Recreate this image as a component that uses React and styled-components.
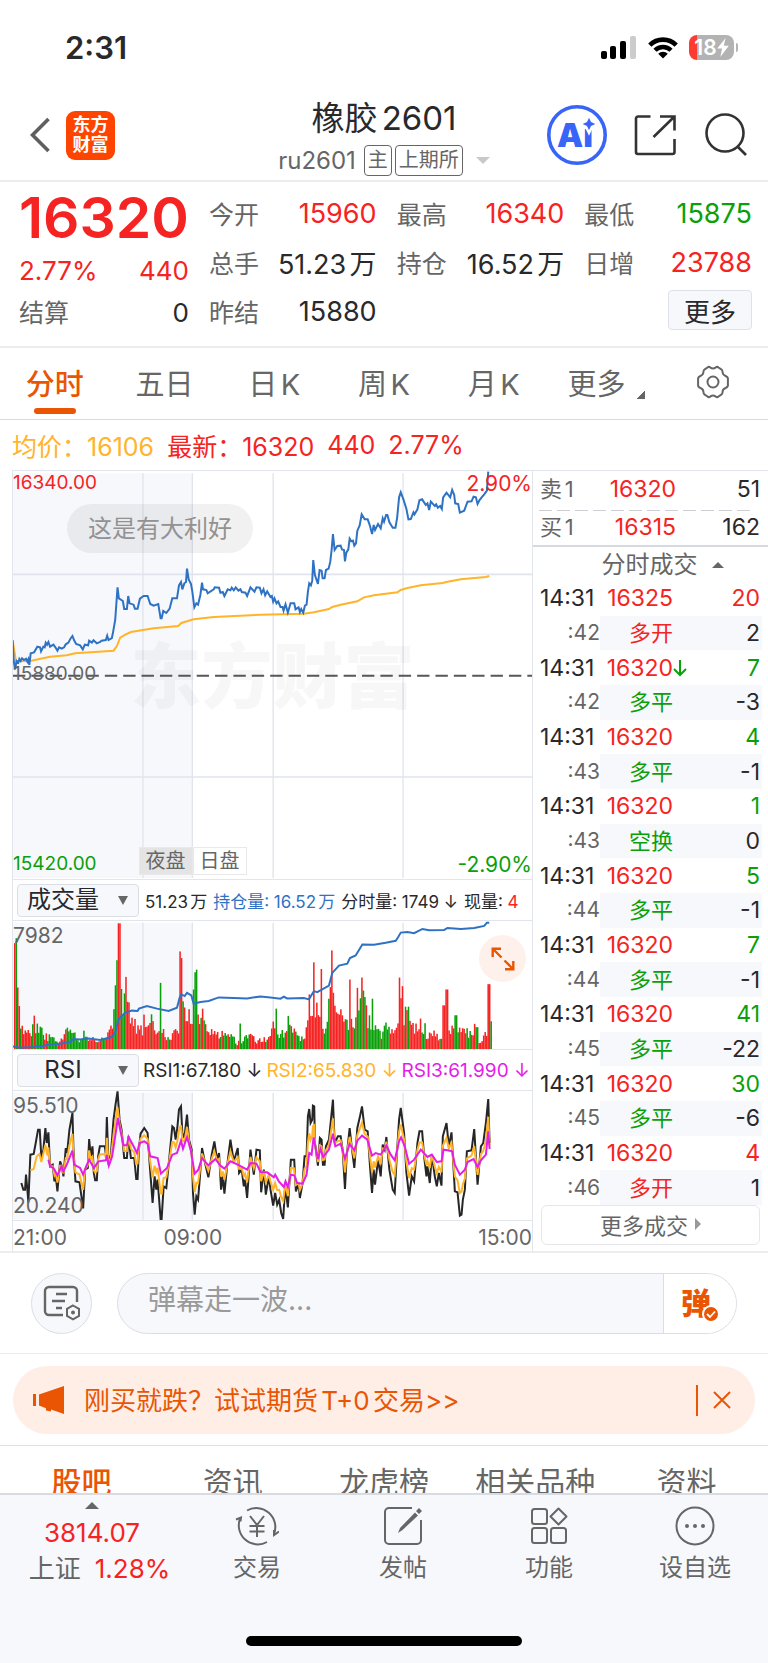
import React, {useState} from "react";
import styled, {createGlobalStyle, css} from "styled-components";

const colors = {
  red: "#f62323",
  green: "#0aa00a",
  orange: "#ea5504",
  yellow: "#ffb429",
  blue: "#2f72c4",
  magenta: "#e31ee6",
  dark: "#29292b",
  grey: "#666666",
  line: "#e3e5ec",
  soft: "#f7f8fb",
};

const GlobalStyle = createGlobalStyle`
  * {
    box-sizing: border-box;
  }
  body {
    margin: 0;
    background: #ffffff;
    color: ${colors.dark};
    font-family: Inter, "Noto Sans CJK SC", sans-serif;
    text-autospace: normal;
  }
  button, input, select {
    font-family: inherit;
    margin: 0;
    padding: 0;
    border: 0;
    background: none;
    color: inherit;
  }
  button {
    cursor: pointer;
  }
  a {
    color: inherit;
    text-decoration: none;
  }
  svg {
    display: block;
    flex-shrink: 0;
  }
`;

const Page = styled.div`
  width: 100%;
  overflow: hidden;
`;

/* status bar */

const StatusBar = styled.div`
  display: flex;
  justify-content: space-between;
  align-items: center;
  height: 89px;
  padding: 5px 30px 0 65px;
`;

const Clock = styled.span`
  font-size: 31px;
  font-weight: 600;
`;

const StatusIcons = styled.div`
  display: flex;
  align-items: center;
  gap: 11px;
`;

const Battery = styled.div`
  display: flex;
  align-items: center;
  justify-content: center;
  width: 45px;
  height: 25px;
  border-radius: 8px;
  background: linear-gradient(90deg, #ff3b30 18%, #b3b3b3 18%);
  color: #ffffff;
  font-size: 21px;
  font-weight: 600;
`;

const BatteryWrapper = styled.div`
  display: flex;
  align-items: center;
  gap: 2px;
`;

const BatteryTip = styled.span`
  width: 2px;
  height: 9px;
  border-radius: 0 2px 2px 0;
  background: #b3b3b3;
`;

/* header */

const Header = styled.header`
  display: grid;
  grid-template-columns: 1fr auto 1fr;
  align-items: center;
  height: 93px;
  padding: 0 20px;
  border-bottom: 2px solid #ececee;
`;

const HeaderLeft = styled.div`
  display: flex;
  align-items: center;
  gap: 16px;
  padding-left: 10px;
`;

const HeaderRight = styled.div`
  display: flex;
  align-items: center;
  justify-content: flex-end;
  gap: 27px;
`;

const IconButton = styled.button`
  display: flex;
`;

const Logo = styled.a`
  display: flex;
  flex-direction: column;
  justify-content: center;
  align-items: center;
  width: 49px;
  height: 49px;
  border-radius: 9px;
  background: #ff4400;
  color: #ffffff;
  font-size: 18px;
  font-weight: 600;
  line-height: 20px;
`;

const TitleBlock = styled.div`
  display: flex;
  flex-direction: column;
  align-items: center;
  padding-top: 8px;
`;

const Title = styled.h1`
  margin: 0;
  font-size: 33px;
  font-weight: 400;
  line-height: 42px;
`;

const ContractButton = styled.button`
  display: flex;
  align-items: center;
  gap: 3px;
  height: 42px;
  font-size: 24px;
  color: ${colors.grey};
`;

const Tag = styled.span`
  margin-left: ${(props) => (props.$first ? "5px" : "0")};
  padding: 0 3px;
  border: 1px solid ${colors.grey};
  border-radius: 4px;
  font-size: 20px;
  line-height: 29px;
`;

const Triangle = styled.span`
  width: 0;
  height: 0;
  border: ${(props) => props.$size || 6}px solid transparent;
  ${(props) => props.$dir === "up" && css`
    border-top: 0;
    border-bottom-color: ${props.$color};
  `}
  ${(props) => props.$dir === "down" && css`
    border-bottom: 0;
    border-top-color: ${props.$color};
  `}
  ${(props) => props.$dir === "right" && css`
    border-right: 0;
    border-left-color: ${props.$color};
  `}
`;

const ContractTriangle = styled(Triangle)`
  margin-left: 10px;
`;

/* quote numbers */

const QuotePanel = styled.section`
  display: grid;
  grid-template-columns: repeat(4, 1fr);
  gap: 20px;
  padding: 7px 16px 10px 19px;
  border-bottom: 2px solid #ececee;
`;

const QuoteColumn = styled.div`
  display: flex;
  flex-direction: column;
`;

const QuoteItem = styled.div`
  display: flex;
  justify-content: space-between;
  align-items: center;
  height: ${(props) => props.$height || 49}px;
  font-size: ${(props) => (props.$height ? 26 : 27)}px;
  white-space: nowrap;
`;

const QuoteLabel = styled.span`
  padding-bottom: 2px;
  color: ${colors.grey};
  font-size: 25px;
`;

const Num = styled.span`
  color: ${(props) => colors[props.$tone] || colors.dark};
`;

const LastPrice = styled.div`
  height: 58px;
  color: ${colors.red};
  font-size: 57px;
  font-weight: 600;
  line-height: 58px;
`;

const MoreButton = styled.button`
  align-self: flex-end;
  width: 84px;
  height: 40px;
  margin-top: 3px;
  border: 1px solid #dfe1e8;
  border-radius: 4px;
  background: ${colors.soft};
  font-size: 26px;
`;

/* period tabs */

const PeriodTabs = styled.nav`
  display: grid;
  grid-template-columns: repeat(7, 1fr);
  height: 72px;
  border-bottom: 1px solid #d8dae1;
`;

const PeriodTab = styled.button`
  display: flex;
  align-items: center;
  justify-content: center;
  position: relative;
  padding-bottom: 3px;
  color: ${(props) => (props.$active ? colors.orange : colors.grey)};
  font-size: 29px;
  font-weight: ${(props) => (props.$active ? 500 : 400)};
  white-space: nowrap;

  &::after {
    content: "";
    display: ${(props) => (props.$active ? "block" : "none")};
    position: absolute;
    bottom: 5px;
    width: 42px;
    height: 6px;
    border-radius: 3px;
    background: ${colors.orange};
  }
`;

const CornerMark = styled.span`
  align-self: flex-end;
  width: 8px;
  height: 8px;
  margin: 0 -6px 17px 12px;
  background: linear-gradient(135deg, transparent 50%, ${colors.grey} 50%);
`;

const Legend = styled.div`
  display: flex;
  align-items: center;
  gap: 13px;
  height: 50px;
  padding-left: 12px;
  color: ${colors.red};
  font-size: 25px;
`;

const LegendAverage = styled.span`
  color: ${colors.yellow};
`;

/* charts */

const Market = styled.section`
  display: grid;
  grid-template-columns: minmax(0, 533fr) minmax(0, 235fr);
  border-bottom: 2px solid #ececee;
`;

const Charts = styled.div`
  margin-left: 12px;
  border: solid ${colors.line};
  border-width: 0 1px 0 1px;
`;

const Plot = styled.div`
  position: relative;
  height: ${(props) => props.$height}px;
  border-top: 1px solid ${colors.line};
  border-bottom: 1px solid ${colors.line};

  svg {
    width: 100%;
    height: 100%;
  }
`;

const PlotLabel = styled.span`
  position: absolute;
  color: ${(props) => colors[props.$tone] || colors.grey};
  font-size: ${(props) => (props.$small ? 19 : 21)}px;
  line-height: 22px;
  ${(props) => (props.$right ? "right: 0;" : "left: 0;")}
  ${(props) => (props.$bottom !== undefined ? `bottom: ${props.$bottom}px;` : `top: ${props.$top}px;`)}
`;

const Watermark = styled.span`
  position: absolute;
  top: 157px;
  left: 50%;
  transform: translateX(-50%);
  color: rgba(60, 60, 70, 0.045);
  font-size: 71px;
  font-weight: 900;
  line-height: 96px;
  white-space: nowrap;
`;

const Bullet = styled.span`
  position: absolute;
  top: 33px;
  left: 54px;
  padding: 0 21px;
  border-radius: 25px;
  background: rgba(0, 0, 0, 0.055);
  color: #929292;
  font-size: 24px;
  line-height: 49px;
`;

const Sessions = styled.div`
  display: flex;
  position: absolute;
  left: 24.2%;
  bottom: 4px;
`;

const Session = styled.span`
  width: 54px;
  border: 1px solid #e9e9ea;
  background: ${(props) => (props.$active ? "#e4e4e5" : "#ffffff")};
  color: ${colors.grey};
  font-size: 20px;
  line-height: 26px;
  text-align: center;
`;

const IndicatorBar = styled.div`
  display: flex;
  align-items: center;
  gap: ${(props) => props.$gap}px;
  height: 40px;
  padding-left: 4px;
  font-size: ${(props) => props.$fontSize}px;
  white-space: nowrap;
`;

const IndicatorPicker = styled.label`
  display: flex;
  align-items: center;
  flex-shrink: 0;
  width: 122px;
  height: 33px;
  padding: 0 10px 0 4px;
  border: 1px solid #dcdee6;
  border-radius: 4px;
  background: ${colors.soft};
`;

const IndicatorSelect = styled.select`
  flex: 1;
  min-width: 0;
  padding-right: 14px;
  appearance: none;
  outline: none;
  font-size: 24px;
  line-height: 30px;
  text-align-last: center;
`;

const ExpandButton = styled.button`
  display: flex;
  align-items: center;
  justify-content: center;
  position: absolute;
  top: 14px;
  right: 6px;
  width: 47px;
  height: 47px;
  border-radius: 50%;
  background: #fef1ec;

  svg {
    width: 24px;
    height: 24px;
  }
`;

const TimeAxis = styled.div`
  display: grid;
  grid-template-columns: 29fr 36fr 35fr;
  height: 30px;
  color: ${colors.grey};
  font-size: 21px;
  line-height: 33px;

  span:last-child {
    text-align: right;
  }
`;

/* order book and trades */

const Side = styled.div`
  display: flex;
  flex-direction: column;
`;

const Book = styled.div`
  border-top: 1px solid ${colors.line};
  border-bottom: 2px solid #d6d9e0;
`;

const BookRow = styled.div`
  display: grid;
  grid-template-columns: 60px 76px 1fr;
  align-items: center;
  height: ${(props) => (props.$last ? 34 : 39)}px;
  padding: 0 8px 3px 7px;
  font-size: 23px;
  line-height: 30px;
  text-align: right;
`;

const BookLabel = styled.span`
  color: ${colors.grey};
  font-size: 22px;
  text-align: left;
`;

const BookDivider = styled.div`
  height: 1px;
  margin: 0 13px 0 6px;
  background: repeating-linear-gradient(90deg, #cdcfd5 0 13px, transparent 13px 18px);
`;

const TradesTitle = styled.button`
  display: flex;
  align-items: center;
  justify-content: center;
  gap: 14px;
  height: 34px;
  padding: 2px 0 0 24px;
  color: ${colors.grey};
  font-size: 24px;
  line-height: 32px;
`;

const TradeTable = styled.table`
  width: auto;
  height: 624px;
  margin: 0 6px 0 7px;
  border-collapse: collapse;
  table-layout: fixed;
  font-size: 23px;
  line-height: 30px;

  td {
    padding: 0;
    text-align: right;
    white-space: nowrap;
  }
`;

const TimeCell = styled.td`
  && {
    width: 60px;
    text-align: left;
  }
`;

const SecondCell = styled.td`
  color: ${colors.grey};
  font-size: 21px;
`;

const PriceCell = styled.td`
  width: 73px;
  color: ${colors.red};
`;

const ArrowCell = styled.td`
  width: 14px;
`;

const AmountCell = styled.td`
  && {
    padding-right: 2px;
    color: ${(props) => colors[props.$tone] || colors.dark};
  }
`;

const TypeCell = styled.td`
  background: ${colors.soft};
  color: ${(props) => colors[props.$tone]};
  font-size: 22px;
`;

const ChangeCell = styled.td`
  && {
    padding-right: 2px;
    background: ${colors.soft};
  }
`;

const MoreTrades = styled.button`
  display: flex;
  align-items: center;
  justify-content: center;
  gap: 7px;
  height: 40px;
  margin: 0 8px;
  padding-bottom: 3px;
  border: 1px solid #e6e7eb;
  border-radius: 6px;
  color: ${colors.grey};
  font-size: 22px;
`;

/* comment bar */

const CommentBar = styled.form`
  display: flex;
  align-items: center;
  gap: 25px;
  height: 101px;
  padding: 0 31px;
  border-bottom: 1px solid #ededf0;
`;

const RoundButton = styled.button`
  display: flex;
  align-items: center;
  justify-content: center;
  flex-shrink: 0;
  width: 61px;
  height: 61px;
  border: 1px solid #dcdee6;
  border-radius: 50%;
  background: ${colors.soft};
`;

const CommentField = styled.div`
  display: flex;
  flex: 1;
  height: 61px;
  border: 1px solid #dcdee6;
  border-radius: 31px;
  background: ${colors.soft};
  overflow: hidden;
`;

const CommentInput = styled.input`
  flex: 1;
  min-width: 0;
  padding: 0 0 6px 30px;
  outline: none;
  font-size: 28px;

  &::placeholder {
    color: #9a9a9a;
    opacity: 1;
  }
`;

const BulletToggle = styled.button`
  position: relative;
  width: 73px;
  padding-left: 17px;
  border-left: 1px solid #dcdee6;
  background: #ffffff;
  color: ${colors.orange};
  font-size: 30px;
  font-weight: 900;
  line-height: 54px;
  text-align: left;

  svg {
    position: absolute;
    right: 16px;
    bottom: 10px;
  }
`;

/* promo banner */

const BannerSection = styled.section`
  padding: 12px 13px 11px;
  border-bottom: 1px solid #e1e2e6;
`;

const Banner = styled.div`
  display: flex;
  align-items: center;
  height: 68px;
  padding: 0 24px 0 20px;
  border-radius: 34px;
  background: #feeee6;
  color: ${colors.orange};
`;

const BannerLink = styled.a`
  flex: 1;
  padding: 0 0 3px 19px;
  font-size: 26px;
`;

const BannerClose = styled.button`
  display: flex;
  align-items: center;
  height: 31px;
  padding-left: 15px;
  border-left: 2px solid ${colors.orange};
`;

const InfoTabs = styled.nav`
  display: grid;
  grid-template-columns: repeat(5, 1fr);
  height: 47px;
  padding: 0 6px;
  overflow: hidden;
`;

const InfoTab = styled.a`
  padding-top: 14px;
  color: ${(props) => (props.$active ? colors.orange : colors.grey)};
  font-size: 30px;
  font-weight: ${(props) => (props.$active ? 500 : 400)};
  line-height: 44px;
  text-align: center;
`;

/* bottom bar */

const BottomBar = styled.footer`
  padding-bottom: 17px;
  border-top: 2px solid #d9dbe2;
  background: ${colors.soft};
`;

const BottomItems = styled.div`
  display: grid;
  grid-template-columns: 184fr 146fr 146fr 146fr 146fr;
  height: 141px;
`;

const IndexButton = styled.button`
  display: flex;
  flex-direction: column;
  align-items: center;
  padding: 7px 0 0 0;
  font-size: 26px;
  line-height: 36px;
  color: ${colors.grey};
`;

const IndexValue = styled.span`
  margin-top: 6px;
  color: ${colors.red};
`;

const IndexRow = styled.span`
  display: flex;
  gap: 14px;
  padding-left: 15px;
`;

const BottomButton = styled.button`
  display: flex;
  flex-direction: column;
  align-items: center;
  gap: 3px;
  padding-top: 9px;
  color: ${colors.grey};
  font-size: 24px;
  line-height: 34px;
`;

const HomeIndicator = styled.div`
  width: 36%;
  height: 10px;
  margin: 0 auto;
  border-radius: 5px;
  background: #000000;
`;

/* series, three units to the pixel */

const shift = (points) => points.map(([x, y]) => [x + 780, y]);

const PRICE = [
  [38,541],[41,600],[45,628],[50,603],[55,608],[58,597],[62,603],[66,595],[72,600],[78,596],[82,605],[85,598],[88,615],[92,580],
  [102,577],[112,560],[120,562],[123,574],[130,560],[134,562],[137,548],[141,554],[145,546],[150,560],[160,554],[166,562],[172,572],
  [177,562],[185,566],[192,562],[197,553],[205,548],[211,536],[217,528],[222,541],[228,552],[240,556],[248,568],[254,554],[264,556],
  [267,542],[275,548],[280,541],[290,550],[300,546],[304,542],[317,540],[321,527],[325,540],[335,534],[338,520],[345,480],[352,382],
  [356,415],[368,423],[372,447],[380,447],[384,408],[388,430],[400,434],[404,446],[412,446],[419,416],[430,408],[442,408],[450,432],
  [460,437],[474,432],[481,475],[484,475],[489,453],[498,459],[508,446],[516,415],[530,415],[536,376],[542,366],[546,388],[552,370],
  [557,366],[560,326],[565,358],[572,372],[576,395],[582,442],[588,430],[593,434],[600,405],[605,368],[608,388],[618,390],[622,400],
  [640,388],[643,382],[656,383],[660,398],[667,396],[672,408],[682,388],[690,391],[694,383],[700,391],[706,382],[714,392],[720,388],
  [724,396],[735,398],[740,408],[750,382],[762,395],[768,382],[778,383],[783,400],[789,388],
  ...shift([
    [14,406],[20,394],[30,411],[34,408],[38,425],[42,415],[48,430],[53,424],[60,441],[66,441],[69,452],[75,433],[82,458],[90,430],
    [101,430],[105,448],[114,442],[118,456],[122,447],[128,458],[133,437],[138,434],[142,395],[146,370],[151,376],[155,362],[158,300],
    [163,345],[172,372],[177,330],[183,332],[186,355],[192,355],[196,330],[204,326],[209,305],[213,270],[217,222],[222,270],[230,258],
    [240,257],[244,268],[250,270],[253,304],[257,278],[263,268],[267,236],[272,244],[277,242],[281,257],[286,250],[290,212],[297,196],
    [303,163],[312,178],[321,178],[328,198],[334,222],[339,195],[343,210],[352,192],[360,205],[366,175],[370,185],[376,165],[380,165],
    [386,187],[396,203],[404,203],[409,175],[415,112],[420,97],[428,118],[437,147],[443,178],[450,177],[458,157],[461,163],[470,148],
    [476,121],[484,118],[495,135],[500,130],[505,150],[510,125],[522,138],[526,133],[531,143],[538,138],[543,147],[547,112],[557,98],
    [568,112],[574,90],[580,105],[583,130],[592,132],[597,158],[610,152],[620,125],[632,124],[638,110],[645,112],[650,132],[656,120],
    [664,110],[670,103],[678,92],[682,35],
  ]),
];

const AVERAGE = [
  [38,541],[48,604],[90,603],[150,590],[200,586],[225,580],[340,572],[350,558],[360,533],[375,524],[392,516],[460,505],[534,498],
  [543,489],[560,484],[580,478],[640,471],[780,464],
  ...shift([
    [130,461],[160,457],[205,447],[215,441],[240,434],[290,424],[310,412],[340,406],[410,397],[420,390],[440,384],[480,376],[545,369],
    [560,365],[600,358],[675,351],[685,348],
  ]),
];

const OPEN_INTEREST = [
  [38,412],[60,416],[100,414],[115,410],[122,413],[140,408],[180,404],[210,399],[220,390],[240,391],[265,388],[300,393],[335,384],
  [345,370],[355,330],[375,310],[395,304],[412,305],[416,298],[440,290],[470,298],[505,305],[530,295],[538,265],[543,255],[553,260],
  [560,250],[573,258],[580,283],[600,278],[625,275],[655,264],[700,266],[740,267],[780,261],
  ...shift([
    [30,264],[60,268],[70,262],[80,267],[130,266],[145,270],[160,245],[170,248],[205,228],[215,190],[235,168],[260,162],[268,145],
    [285,137],[305,104],[340,105],[375,99],[405,93],[412,82],[420,68],[440,66],[460,70],[475,62],[485,57],[505,61],[550,60],[560,54],
    [600,57],[640,54],[670,48],[678,38],[685,38],
  ]),
];

const VOLUME_SHAPE = [
  [42,300],[50,320],[55,150],[65,65],[90,50],[100,90],[118,60],[135,45],[170,25],[195,50],[220,65],[235,20],[250,50],[290,22],[325,45],
  [340,95],[348,285],[354,360],[362,215],[372,140],[380,170],[390,110],[405,75],[425,60],[440,60],[455,85],[470,40],[490,60],[510,22],
  [520,65],[535,40],[541,280],[549,130],[565,125],[575,65],[583,235],[592,100],[608,95],[620,55],[640,50],[690,48],[710,18],[745,45],
  [770,25],[805,35],
  ...shift([
    [47,95],[55,40],[85,75],[120,28],[135,45],[148,120],[160,130],[180,105],[195,60],[212,250],[225,110],[250,85],[290,80],[303,190],
    [320,100],[340,90],[360,45],[378,70],[392,60],[405,50],[420,190],[430,110],[445,115],[458,60],[480,75],[500,40],[515,55],[540,30],
    [560,50],[585,75],[620,55],[640,40],[655,25],[680,60],[690,90],
  ]),
];

const VOLUME_PEAKS = [
  [44,320,1],[48,335,0],[53,186,1],[57,130,1],[357,380,1],[361,352,0],[378,218,1],[481,200,0],[541,295,1],[545,275,1],[583,232,0],
  [587,240,0],[608,122,1],[720,77,0],[433,104,1],[455,105,0],
  ...[
    [49,122,0],[84,100,0],[148,165,1],[161,262,1],[183,242,1],[215,298,1],[219,170,1],[242,120,1],[269,210,1],[292,185,1],[305,216,1],
    [313,157,0],[336,152,0],[376,80,0],[418,216,1],[424,190,1],[436,128,0],[445,128,0],[480,92,1],[494,78,0],[549,132,1],[558,180,1],
    [585,102,0],[640,76,1],[648,66,0],[684,196,1],[689,84,0],
  ].map(([x, h, c]) => [x + 780, h, c]),
];

const RSI_FAST = [
  [64,820],[70,840],[75,840],[78,795],[82,840],[85,878],[91,735],[101,733],[107,700],[114,660],[119,660],[124,745],[130,720],[136,655],
  [140,700],[145,668],[150,770],[158,765],[163,815],[166,790],[172,845],[180,755],[184,765],[190,800],[197,715],[201,730],[208,660],
  [217,610],[220,720],[226,815],[238,818],[249,896],[255,780],[263,775],[267,688],[272,740],[277,710],[281,790],[285,812],[290,812],
  [294,740],[299,710],[314,710],[317,735],[320,622],[325,765],[332,735],[340,630],[346,585],[352,545],[358,630],[364,660],[372,745],
  [380,745],[385,680],[392,745],[402,745],[408,808],[412,808],[416,720],[421,672],[432,655],[442,670],[448,760],[457,880],[463,800],
  [468,840],[472,810],[481,928],[484,928],[490,830],[498,835],[508,735],[516,650],[521,655],[526,690],[531,655],[536,600],[542,590],
  [546,670],[552,685],[560,615],[566,690],[574,720],[578,850],[583,915],[588,860],[593,870],[598,810],[605,715],[614,760],[624,803],
  [634,735],[642,695],[650,750],[656,730],[662,840],[667,800],[672,852],[680,770],[690,690],[700,755],[706,735],[712,715],[716,790],
  [724,780],[730,830],[734,810],[740,865],[750,720],[760,795],[768,720],[778,722],[782,848],[790,780],[796,855],[805,800],
  ...shift([
    [30,840],[38,888],[44,850],[50,885],[56,870],[62,910],[68,928],[74,830],[82,893],[91,750],[101,750],[106,845],[114,820],[118,865],
    [126,820],[132,740],[138,740],[142,620],[146,598],[150,640],[155,630],[157,588],[161,590],[163,700],[172,768],[178,685],[183,690],
    [187,765],[192,765],[196,710],[205,690],[212,620],[217,570],[222,700],[232,680],[240,680],[246,720],[253,838],[258,740],[267,655],
    [273,710],[281,775],[290,655],[298,620],[304,590],[312,660],[321,665],[328,770],[334,850],[339,780],[343,825],[352,750],[360,800],
    [366,705],[372,720],[377,682],[386,780],[396,840],[402,850],[408,740],[415,630],[420,595],[430,670],[437,790],[445,858],[453,800],
    [460,815],[470,700],[476,665],[484,665],[490,740],[497,800],[500,770],[507,820],[513,735],[522,800],[528,830],[534,790],[542,828],
    [546,680],[557,640],[564,710],[572,668],[582,845],[590,848],[597,918],[602,915],[606,870],[612,840],[618,725],[632,722],[640,658],
    [650,825],[660,710],[667,700],[675,640],[682,568],[686,700],
  ]),
];

const RSI_SLOW = [
  [145,750],[150,770],[160,775],[172,797],[184,770],[190,785],[200,765],[217,723],[222,765],[240,775],[249,795],[258,770],[267,750],
  [274,762],[281,775],[295,755],[317,752],[320,736],[326,768],[336,740],[345,680],[353,625],[362,670],[370,707],[380,707],[385,682],
  [400,710],[410,730],[418,700],[432,695],[442,702],[450,740],[472,745],[482,792],[500,775],[516,735],[530,730],[542,693],[548,717],
  [560,682],[572,725],[583,792],[594,780],[605,745],[624,767],[645,748],[660,768],[672,777],[690,755],[712,765],[740,780],[750,760],
  [768,762],[780,787],[800,788],
  ...shift([
    [40,803],[44,795],[55,815],[70,832],[75,815],[82,832],[91,795],[101,797],[110,820],[126,822],[138,795],[146,730],[153,735],[159,683],
    [172,748],[180,718],[188,742],[205,720],[217,672],[224,710],[240,702],[253,747],[267,703],[281,722],[290,693],[304,678],[320,690],
    [334,738],[345,730],[360,735],[377,708],[390,735],[402,752],[415,695],[421,683],[432,710],[445,762],[460,750],[480,720],[500,742],
    [513,735],[528,757],[542,755],[548,720],[560,722],[574,725],[582,765],[597,795],[612,780],[620,757],[638,748],[650,772],[660,752],
    [675,735],[682,665],[686,718],
  ]),
];

const valueAt = (points, x) => {
  const next = points.findIndex((p) => p[0] >= x);
  if (next <= 0) return points[next === 0 ? 0 : points.length - 1][1];
  const [x0, y0] = points[next - 1];
  const [x1, y1] = points[next];
  return y0 + ((y1 - y0) * (x - x0)) / (x1 - x0);
};

const RSI_MIDDLE = [
  [91,782],[101,778],[110,740],[118,733],[124,757],[136,705],[142,738],
  ...RSI_FAST.filter(([x]) => x >= 145).map(([x, y]) => [x, y * 0.45 + valueAt(RSI_SLOW, x) * 0.55]),
];

const buildVolume = () => {
  const bars = [];
  let seed = 11;
  let up = 1;
  const random = () => {
    seed = (seed * 16807) % 2147483647;
    return seed / 2147483647;
  };
  for (let x = 42; x < 1472; x += 4.5) {
    if (random() < 0.4) up = random() < 0.62 ? 1 : 0;
    const peak = VOLUME_PEAKS.find((p) => Math.abs(p[0] - x - 2.25) <= 2.25);
    const noisy = valueAt(VOLUME_SHAPE, x + 2) * (0.6 + random() * 0.6);
    bars.push({x, height: peak ? peak[1] : Math.max(noisy, 6), up: peak ? peak[2] : up});
  }
  return bars;
};

const VOLUME = buildVolume();

const toLine = (points) => points.map((p) => p.join(",")).join(" ");

const Series = ({points, color, width = 2}) => (
  <polyline
    points={toLine(points)}
    fill="none"
    stroke={color}
    strokeWidth={width}
    strokeLinejoin="miter"
    vectorEffect="non-scaling-stroke"
  />
);

const Grid = ({top, bottom}) => (
  <g>
    <rect x="39" y={top} width="537" height={bottom - top} fill={colors.soft}/>
    {[428, 576, 818, 1207].map((x) => (
      <line key={x} x1={x} x2={x} y1={top} y2={bottom} stroke="#e1e4ec" strokeWidth="4"/>
    ))}
  </g>
);

const trades = [
  {price: "16325", amount: "20", tone: "red", second: ":42", type: "多开", typeTone: "red", change: "2"},
  {price: "16320", amount: "7", tone: "green", second: ":42", type: "多平", typeTone: "green", change: "-3", down: true},
  {price: "16320", amount: "4", tone: "green", second: ":43", type: "多平", typeTone: "green", change: "-1"},
  {price: "16320", amount: "1", tone: "green", second: ":43", type: "空换", typeTone: "green", change: "0"},
  {price: "16320", amount: "5", tone: "green", second: ":44", type: "多平", typeTone: "green", change: "-1"},
  {price: "16320", amount: "7", tone: "green", second: ":44", type: "多平", typeTone: "green", change: "-1"},
  {price: "16320", amount: "41", tone: "green", second: ":45", type: "多平", typeTone: "green", change: "-22"},
  {price: "16320", amount: "30", tone: "green", second: ":45", type: "多平", typeTone: "green", change: "-6"},
  {price: "16320", amount: "4", tone: "red", second: ":46", type: "多开", typeTone: "red", change: "1"},
];

const quoteColumns = [
  [["今开", "15960", "red"], ["总手", "51.23万"], ["昨结", "15880"]],
  [["最高", "16340", "red"], ["持仓", "16.52万"]],
  [["最低", "15875", "green"], ["日增", "23788", "red"]],
];

const periods = ["分时", "五日", "日K", "周K", "月K"];
const infoTabs = ["股吧", "资讯", "龙虎榜", "相关品种", "资料"];

const StatusRow = () => (
  <StatusBar>
    <Clock>2:31</Clock>
    <StatusIcons>
      <svg width="36" height="23" viewBox="0 0 36 23">
        <rect x="0" y="15" width="6" height="8" rx="2"/>
        <rect x="9" y="10" width="6" height="13" rx="2"/>
        <rect x="19" y="5" width="6" height="18" rx="2"/>
        <rect x="29" y="0" width="6" height="23" rx="2" fill="#cccccc"/>
      </svg>
      <svg width="30" height="23" viewBox="0 0 30 23" fill="none" stroke="#000000" strokeWidth="5">
        <path d="M1.8 9.2a18.5 18.5 0 0 1 26.4 0" strokeWidth="4.6"/>
        <path d="M7 14.3a11.2 11.2 0 0 1 16 0" strokeWidth="4.4"/>
        <path d="M15 22.5l-4.8-4.8a6.8 6.8 0 0 1 9.6 0z" fill="#000000" stroke="none"/>
      </svg>
      <BatteryWrapper>
        <Battery>
          18
          <svg width="12" height="19" viewBox="0 0 11 18" fill="#ffffff">
            <path d="M8 0L0 10h4.6L3 18l8-10.6H6.2z"/>
          </svg>
        </Battery>
        <BatteryTip/>
      </BatteryWrapper>
    </StatusIcons>
  </StatusBar>
);

const TopHeader = () => (
  <Header>
    <HeaderLeft>
      <IconButton aria-label="返回">
        <svg width="20" height="36" viewBox="0 0 20 36" fill="none" stroke="#5f5f5f" strokeWidth="3.6">
          <path d="M18.5 2L2.5 18l16 16"/>
        </svg>
      </IconButton>
      <Logo href="#home">
        <span>东方</span>
        <span>财富</span>
      </Logo>
    </HeaderLeft>
    <TitleBlock>
      <Title>橡胶2601</Title>
      <ContractButton>
        ru2601
        <Tag $first>主</Tag>
        <Tag>上期所</Tag>
        <ContractTriangle $dir="down" $size={7} $color="#c9c9c9"/>
      </ContractButton>
    </TitleBlock>
    <HeaderRight>
      <IconButton aria-label="Ai">
        <svg width="60" height="60" viewBox="0 0 60 60" fill="#3865f8">
          <circle cx="30" cy="30" r="28.2" fill="none" stroke="#3865f8" strokeWidth="3.6"/>
          <text x="28" y="42" textAnchor="middle" fontSize="33" fontWeight="900">Ai</text>
          <path
            d="M42 10l2.900 6.100L51 19l-6.100 2.900L42 28l-2.900-6.100L33 19l6.100-2.900z"
            stroke="#ffffff" strokeWidth="2.400"
          />
        </svg>
      </IconButton>
      <IconButton aria-label="分享">
        <svg width="43" height="42" viewBox="0 0 43 42" fill="none" stroke="#333333" strokeWidth="2.6">
          <path d="M16.5 2.5H4a2 2 0 0 0-2 2V38a2 2 0 0 0 2 2h34.500a2 2 0 0 0 2-2V25"/>
          <path d="M26 2.500h14.500v14M40.500 2.500L19.500 23"/>
        </svg>
      </IconButton>
      <IconButton aria-label="搜索">
        <svg width="44" height="44" viewBox="0 0 44 44" fill="none" stroke="#333333" strokeWidth="2.6">
          <circle cx="21" cy="20" r="18.5"/>
          <path d="M33.500 33.500l8.500 8.500"/>
        </svg>
      </IconButton>
    </HeaderRight>
  </Header>
);

const Quotes = () => (
  <QuotePanel>
    <QuoteColumn>
      <LastPrice>16320</LastPrice>
      <QuoteItem $height={47}>
        <Num $tone="red">2.77%</Num>
        <Num $tone="red">440</Num>
      </QuoteItem>
      <QuoteItem $height={36}>
        <QuoteLabel>结算</QuoteLabel>
        <Num>0</Num>
      </QuoteItem>
    </QuoteColumn>
    {quoteColumns.map((column, index) => (
      <QuoteColumn key={index}>
        {column.map(([label, value, tone]) => (
          <QuoteItem key={label}>
            <QuoteLabel>{label}</QuoteLabel>
            <Num $tone={tone}>{value}</Num>
          </QuoteItem>
        ))}
        {index === 2 && <MoreButton>更多</MoreButton>}
      </QuoteColumn>
    ))}
  </QuotePanel>
);

const PricePlot = () => (
  <Plot $height={410}>
    <svg viewBox="39 33 1554 1224" preserveAspectRatio="none">
      <Grid top={40} bottom={1254}/>
      <line x1="39" x2="1593" y1="343" y2="343" stroke="#e1e4ec" strokeWidth="5"/>
      <line x1="39" x2="1593" y1="951" y2="951" stroke="#e1e4ec" strokeWidth="5"/>
      <line x1="39" x2="1593" y1="647" y2="647" stroke="#57575a" strokeWidth="6" strokeDasharray="37 18"/>
      <Series points={AVERAGE} color={colors.yellow}/>
      <Series points={PRICE} color={colors.blue}/>
    </svg>
    <Watermark>东方财富</Watermark>
    <PlotLabel $small $tone="red" $top={1}>16340.00</PlotLabel>
    <PlotLabel $tone="red" $top={2} $right>2.90%</PlotLabel>
    <PlotLabel $small $top={192}>15880.00</PlotLabel>
    <PlotLabel $small $tone="green" $bottom={4}>15420.00</PlotLabel>
    <PlotLabel $tone="green" $bottom={3} $right>-2.90%</PlotLabel>
    <Bullet>这是有大利好</Bullet>
    <Sessions>
      <Session $active>夜盘</Session>
      <Session>日盘</Session>
    </Sessions>
  </Plot>
);

const VolumePlot = () => (
  <Plot $height={130}>
    <svg viewBox="39 33 1554 387" preserveAspectRatio="none">
      <Grid top={38} bottom={420}/>
      {VOLUME.map((bar) => (
        <rect
          key={bar.x}
          x={bar.x}
          y={420 - bar.height}
          width="4.6"
          height={bar.height}
          fill={bar.up ? colors.red : colors.green}
        />
      ))}
      <Series points={OPEN_INTEREST} color={colors.blue}/>
    </svg>
    <PlotLabel $top={4}>7982</PlotLabel>
    <ExpandButton aria-label="全屏">
      <svg viewBox="0 0 24 24" fill="none" stroke={colors.orange} strokeWidth="2.4">
        <path d="M10 1.700H1.700V10M2 2l8.500 8.500M14 22.300h8.300V14M22 22l-8.500-8.500"/>
      </svg>
    </ExpandButton>
  </Plot>
);

const RsiPlot = () => (
  <Plot $height={131}>
    <svg viewBox="39 544 1554 387" preserveAspectRatio="none">
      <Grid top={549} bottom={930}/>
      <Series points={RSI_FAST} color="#262626"/>
      <Series points={RSI_MIDDLE} color={colors.yellow}/>
      <Series points={RSI_SLOW} color={colors.magenta}/>
    </svg>
    <PlotLabel $top={4}>95.510</PlotLabel>
    <PlotLabel $bottom={3}>20.240</PlotLabel>
  </Plot>
);

const Picker = ({label, options}) => (
  <IndicatorPicker>
    <IndicatorSelect aria-label={label}>
      {options.map((option) => <option key={option}>{option}</option>)}
    </IndicatorSelect>
    <svg width="10" height="9" viewBox="0 0 10 9"><path d="M0 0h10L5 9z" fill="#666666"/></svg>
  </IndicatorPicker>
);

const Trades = () => (
  <TradeTable>
    <tbody>
      {trades.map((trade, index) => (
        <React.Fragment key={index}>
          <tr>
            <TimeCell>14:31</TimeCell>
            <PriceCell>{trade.price}</PriceCell>
            <ArrowCell>{trade.down && (
              <svg width="14" height="18" viewBox="0 0 14 18" fill="none" stroke={colors.green} strokeWidth="2">
                <path d="M7 1v15M1 10l6 6 6-6"/>
              </svg>
            )}</ArrowCell>
            <AmountCell $tone={trade.tone}>{trade.amount}</AmountCell>
          </tr>
          <tr>
            <SecondCell>{trade.second}</SecondCell>
            <TypeCell $tone={trade.typeTone}>{trade.type}</TypeCell>
            <ChangeCell colSpan={2}>{trade.change}</ChangeCell>
          </tr>
        </React.Fragment>
      ))}
    </tbody>
  </TradeTable>
);

const BottomIcon = ({children}) => (
  <svg width="44" height="44" viewBox="0 0 44 44" fill="none" stroke="#666666" strokeWidth="2">
    {children}
  </svg>
);

const App = () => {
  const [period, setPeriod] = useState("分时");
  const [comment, setComment] = useState("");

  return (
    <Page>
      <GlobalStyle/>
      <StatusRow/>
      <TopHeader/>
      <Quotes/>

      <PeriodTabs>
        {periods.map((name) => (
          <PeriodTab key={name} $active={period === name} onClick={() => setPeriod(name)}>
            {name}
          </PeriodTab>
        ))}
        <PeriodTab>更多<CornerMark/></PeriodTab>
        <PeriodTab aria-label="设置">
          <svg width="36" height="34" viewBox="0 0 36 34" fill="none" stroke="#666666" strokeWidth="2">
            <path
              d="M12.500 2.500q1.300-1.300 3 .1 2.500 1.800 5 0 1.700-1.400 3-.1l2.800 1.800q1.300.9 1.300 3 .2 2.700 3 3.700 2 .8 2.300 2.200v7.600q-.3 1.400-2.300 2.200-2.800 1-3 3.700 0 2.100-1.300 3l-2.800 1.800q-1.300 1.300-3-.1-2.500-1.800-5 0-1.700 1.400-3 .1l-2.800-1.800q-1.300-.9-1.300-3-.2-2.700-3-3.700-2-.8-2.300-2.200v-7.600q.3-1.400 2.300-2.200 2.800-1 3-3.700 0-2.100 1.300-3z"
            />
            <circle cx="18" cy="17" r="5.5"/>
          </svg>
        </PeriodTab>
      </PeriodTabs>

      <Legend>
        <LegendAverage>均价：16106</LegendAverage>
        <span>最新：16320</span>
        <span>440</span>
        <span>2.77%</span>
      </Legend>

      <Market>
        <Charts>
          <PricePlot/>
          <IndicatorBar $fontSize={17} $gap={6}>
            <Picker label="副图一" options={["成交量", "持仓量"]}/>
            <Num>51.23万</Num>
            <Num $tone="blue">持仓量: 16.52万</Num>
            <Num>分时量: 1749 ↓</Num>
            <Num>现量: <Num $tone="red">4</Num></Num>
          </IndicatorBar>
          <VolumePlot/>
          <IndicatorBar $fontSize={19} $gap={4}>
            <Picker label="副图二" options={["RSI", "MACD", "KDJ"]}/>
            <Num>RSI1:67.180 ↓</Num>
            <Num $tone="yellow">RSI2:65.830 ↓</Num>
            <Num $tone="magenta">RSI3:61.990 ↓</Num>
          </IndicatorBar>
          <RsiPlot/>
          <TimeAxis>
            <span>21:00</span>
            <span>09:00</span>
            <span>15:00</span>
          </TimeAxis>
        </Charts>

        <Side>
          <Book>
            <BookRow>
              <BookLabel>卖1</BookLabel>
              <Num $tone="red">16320</Num>
              <Num>51</Num>
            </BookRow>
            <BookDivider/>
            <BookRow $last>
              <BookLabel>买1</BookLabel>
              <Num $tone="red">16315</Num>
              <Num>162</Num>
            </BookRow>
          </Book>
          <TradesTitle>分时成交<Triangle $dir="up" $color="#666666"/></TradesTitle>
          <Trades/>
          <MoreTrades>更多成交<Triangle $dir="right" $color="#999999"/></MoreTrades>
        </Side>
      </Market>

      <CommentBar onSubmit={(e) => e.preventDefault()}>
        <RoundButton type="button" aria-label="弹幕设置">
          <svg width="38" height="36" viewBox="0 0 38 36" fill="none" stroke="#666666" strokeWidth="2.4">
            <path d="M34 17V6a4 4 0 0 0-4-4H6a4 4 0 0 0-4 4v20a4 4 0 0 0 4 4h14"/>
            <path d="M13 9h11M9 16h13M13 23h6"/>
            <path d="M30 20.500l6 3.400v7l-6 3.400-6-3.400v-7z" strokeWidth="2"/>
            <circle cx="30" cy="27.4" r="2" fill="#666666" stroke="none"/>
          </svg>
        </RoundButton>
        <CommentField>
          <CommentInput
            aria-label="弹幕"
            placeholder="弹幕走一波..."
            value={comment}
            onChange={(e) => setComment(e.currentTarget.value)}
          />
          <BulletToggle type="button">
            弹
            <svg width="18" height="18" viewBox="0 0 18 18">
              <circle cx="9" cy="9" r="8" fill={colors.orange} stroke="#ffffff" strokeWidth="2"/>
              <path d="M5 9l3 3 5-5.500" fill="none" stroke="#ffffff" strokeWidth="1.8"/>
            </svg>
          </BulletToggle>
        </CommentField>
      </CommentBar>

      <BannerSection>
        <Banner>
          <svg width="32" height="28" viewBox="0 0 32 28" fill={colors.orange}>
            <rect x="0" y="8" width="3" height="12"/>
            <path d="M6 8.500L31 0v28l-13-4.500v2l-5-1v-2.300l-7-2.700z"/>
          </svg>
          <BannerLink href="#promo">刚买就跌？试试期货T+0交易&gt;&gt;</BannerLink>
          <BannerClose aria-label="关闭">
            <svg width="18" height="18" viewBox="0 0 18 18" stroke={colors.orange} strokeWidth="2">
              <path d="M1 1l16 16M17 1L1 17"/>
            </svg>
          </BannerClose>
        </Banner>
      </BannerSection>

      <InfoTabs>
        {infoTabs.map((name, index) => (
          <InfoTab key={name} href={`#tab-${index}`} $active={index === 0}>{name}</InfoTab>
        ))}
      </InfoTabs>

      <BottomBar>
        <BottomItems>
          <IndexButton>
            <Triangle $dir="up" $size={7} $color="#666666"/>
            <IndexValue>3814.07</IndexValue>
            <IndexRow>上证<Num $tone="red">1.28%</Num></IndexRow>
          </IndexButton>
          <BottomButton>
            <BottomIcon>
              <path d="M12 6.500a19 19 0 0 1 27 23.500M32 38a19 19 0 0 1-26.500-24.500"/>
              <path d="M1 15.500l5-2-.5 4M44 27.500l-5 3.500v-5"/>
              <path d="M15 12l7 9 7-9M22 21v12M14.500 22h15M14.500 27.500h15"/>
            </BottomIcon>
            交易
          </BottomButton>
          <BottomButton>
            <BottomIcon>
              <path d="M31 4H8a4 4 0 0 0-4 4v28a4 4 0 0 0 4 4h28a4 4 0 0 0 4-4V16"/>
              <path d="M17 29l2-5L34 8.500l3 3L21.500 26zM35 7l3-3 3 3-3 3z" fill="#666666" stroke="none"/>
            </BottomIcon>
            发帖
          </BottomButton>
          <BottomButton>
            <BottomIcon>
              <rect x="5" y="5" width="15" height="15" rx="2.5"/>
              <rect x="5" y="24" width="15" height="15" rx="2.5"/>
              <rect x="24" y="24" width="15" height="15" rx="2.5"/>
              <path d="M31.500 4.500l8 8-8 8-8-8z" strokeLinejoin="round"/>
            </BottomIcon>
            功能
          </BottomButton>
          <BottomButton>
            <BottomIcon>
              <circle cx="22" cy="22" r="18.5"/>
              <g fill="#666666" stroke="none">
                <circle cx="14" cy="22" r="2"/>
                <circle cx="22" cy="22" r="2"/>
                <circle cx="30" cy="22" r="2"/>
              </g>
            </BottomIcon>
            设自选
          </BottomButton>
        </BottomItems>
        <HomeIndicator/>
      </BottomBar>
    </Page>
  );
};

export default App;
